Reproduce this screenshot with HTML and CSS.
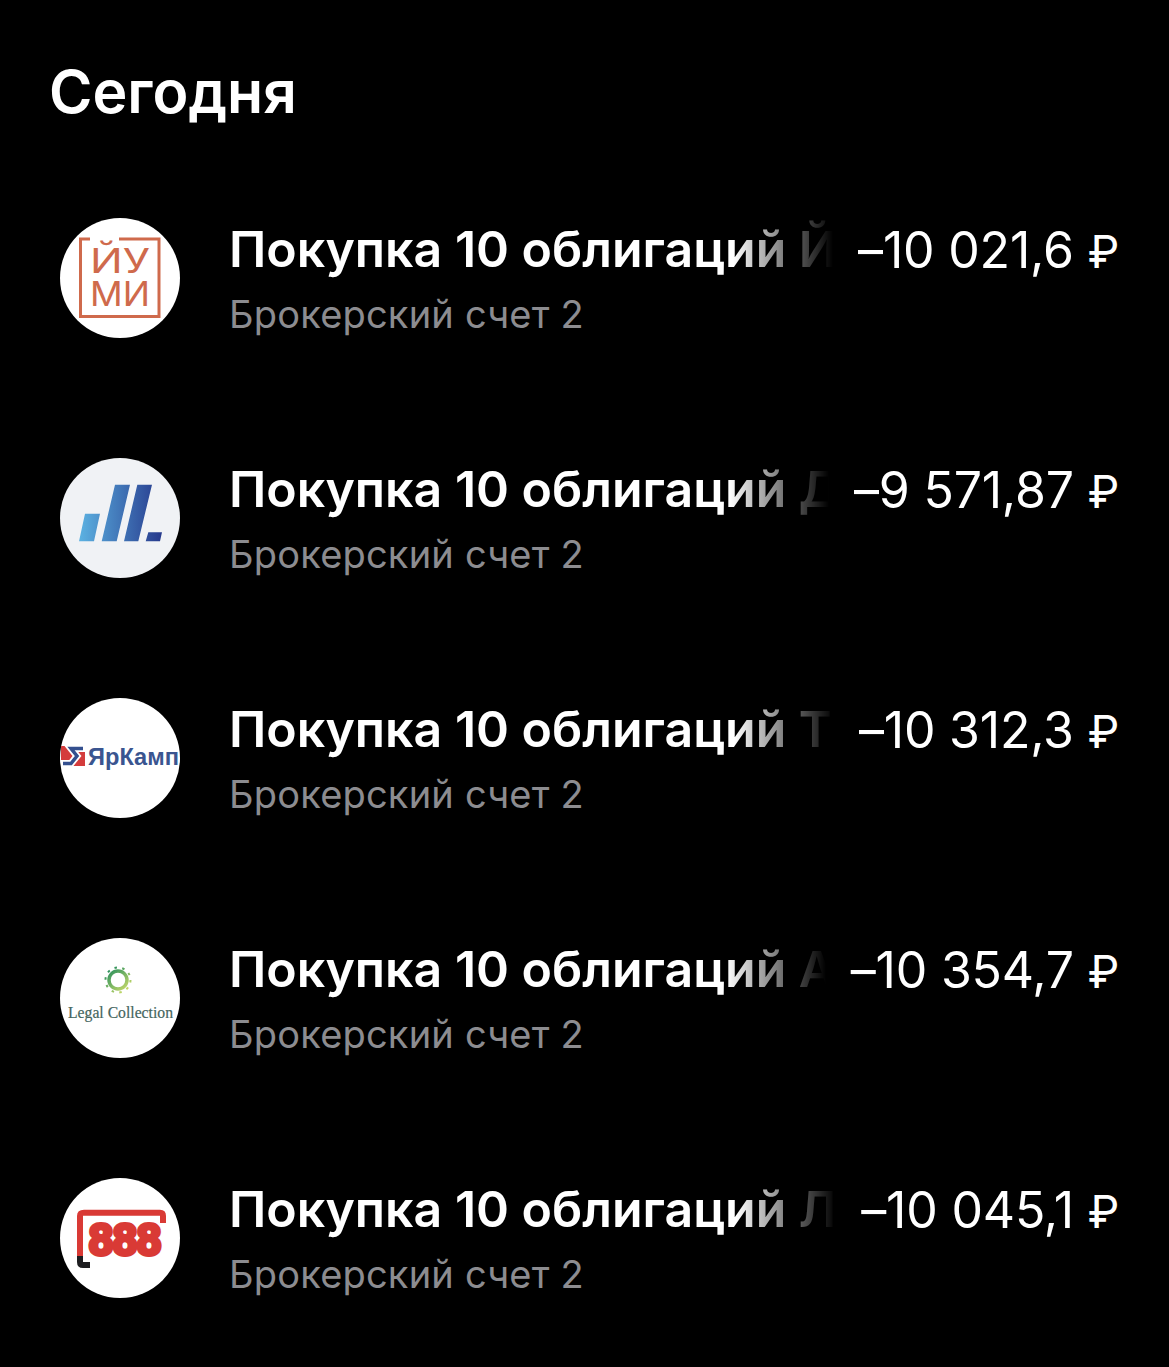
FILE: index.html
```html
<!DOCTYPE html>
<html lang="ru">

<head>
    <meta charset="UTF-8">
    <meta name="viewport" content="width=device-width, initial-scale=1.0">
    <title>Сегодня</title>
    <link rel="stylesheet" href="styles.css">
</head>

<body>
    <h1 class="day-title">Сегодня</h1>

    <div class="operations">
        <div class="operation">
            <div class="logo">
                <svg viewBox="0 0 120 120" width="120" height="120">
                    <path d="M30 21H20.5V98.5H99V21H59" fill="none" stroke="#cf6a4c" stroke-width="3"/>
                    <text class="logo-imi" x="30" y="55" textLength="60" lengthAdjust="spacingAndGlyphs">ЙУ</text>
                    <text class="logo-imi" x="30" y="88" textLength="60" lengthAdjust="spacingAndGlyphs">МИ</text>
                </svg>
            </div>
            <div class="operation-text">
                <div class="operation-name">Покупка 10 облигаций Йошкар-Ола</div>
                <div class="operation-account">Брокерский счет 2</div>
            </div>
            <div class="operation-sum">–10 021,6 <span class="rub">₽</span></div>
        </div>

        <div class="operation">
            <div class="logo logo-grey">
                <svg viewBox="0 0 120 120" width="120" height="120">
                    <defs>
                        <linearGradient id="bars" gradientUnits="userSpaceOnUse" x1="19" y1="0" x2="102" y2="0">
                            <stop offset="0" stop-color="#5cb2e2"/>
                            <stop offset="1" stop-color="#26398c"/>
                        </linearGradient>
                    </defs>
                    <path fill="url(#bars)" d="M25 55.7H40L34 83.3H19ZM55 26.7H70L56.7 83.3H41.7ZM77.3 26.7H92L78.3 83.3H64ZM88.3 74.3H102L100 83.3H85.7Z"/>
                </svg>
            </div>
            <div class="operation-text">
                <div class="operation-name">Покупка 10 облигаций Дельта</div>
                <div class="operation-account">Брокерский счет 2</div>
            </div>
            <div class="operation-sum">–9 571,87 <span class="rub">₽</span></div>
        </div>

        <div class="operation">
            <div class="logo">
                <svg viewBox="0 0 120 120" width="120" height="120">
                    <path fill="#d43c3c" d="M1 48H13V62H1ZM13 54H25V68H13Z"/>
                    <path d="M23 50.5H11L17 58L11 65.5H3" fill="none" stroke="#fff" stroke-width="7"/>
                    <path d="M23 50.5H11L17 58L11 65.5H3" fill="none" stroke="#34508f" stroke-width="3.5"/>
                    <text class="logo-yarkamp" x="28" y="67" textLength="91" lengthAdjust="spacingAndGlyphs">ЯрКамп</text>
                </svg>
            </div>
            <div class="operation-text">
                <div class="operation-name">Покупка 10 облигаций Т Плюс</div>
                <div class="operation-account">Брокерский счет 2</div>
            </div>
            <div class="operation-sum">–10 312,3 <span class="rub">₽</span></div>
        </div>

        <div class="operation">
            <div class="logo">
                <svg viewBox="0 0 120 120" width="120" height="120">
                    <defs>
                        <linearGradient id="wreath" gradientUnits="userSpaceOnUse" x1="48" y1="30" x2="68" y2="54">
                            <stop offset="0" stop-color="#1f8a5c"/>
                            <stop offset="1" stop-color="#d4e06a"/>
                        </linearGradient>
                    </defs>
                    <circle cx="58" cy="42" r="9" fill="none" stroke="url(#wreath)" stroke-width="3.5"/>
                    <circle cx="58" cy="42" r="12.5" fill="none" stroke="url(#wreath)" stroke-width="2" stroke-dasharray="2.5 5.35"/>
                    <text class="logo-legal" x="8" y="79.5" textLength="105" lengthAdjust="spacingAndGlyphs">Legal Collection</text>
                </svg>
            </div>
            <div class="operation-text">
                <div class="operation-name">Покупка 10 облигаций Агентство</div>
                <div class="operation-account">Брокерский счет 2</div>
            </div>
            <div class="operation-sum">–10 354,7 <span class="rub">₽</span></div>
        </div>

        <div class="operation">
            <div class="logo">
                <svg viewBox="0 0 120 120" width="120" height="120">
                    <path d="M20 78V38Q20 34.7 24 34.7H100Q103 34.7 103 38V45" fill="none" stroke="#d93a35" stroke-width="6"/>
                    <path d="M20 78V84Q20 87 23 87H30" fill="none" stroke="#1d1d20" stroke-width="6"/>
                    <text class="logo-888" x="29" y="77" textLength="72" lengthAdjust="spacingAndGlyphs">888</text>
                </svg>
            </div>
            <div class="operation-text">
                <div class="operation-name">Покупка 10 облигаций Лига</div>
                <div class="operation-account">Брокерский счет 2</div>
            </div>
            <div class="operation-sum">–10 045,1 <span class="rub">₽</span></div>
        </div>
    </div>
</body>

</html>
```

FILE: styles.css
```css
body {
    margin: 0;
    background-color: #000;
    color: #fff;
    font-family: Inter, "Liberation Sans", sans-serif;
    padding: 60px 50px 0 49px;
}

.day-title {
    margin: 0 0 94px;
    font-size: 59px;
    line-height: 64px;
    font-weight: 600;
}

.operation {
    display: flex;
    align-items: center;
    height: 120px;
    margin-bottom: 120px;
    padding-left: 11px;
}

.logo {
    flex: none;
    width: 120px;
    height: 120px;
    border-radius: 50%;
    overflow: hidden;
    background-color: #fff;
    margin-right: 49px;
}

.logo svg {
    display: block;
}

.logo-grey {
    background-color: #f0f2f5;
}

.logo-imi {
    font-size: 34px;
    font-weight: 400;
    fill: #cf6a4c;
}

.logo-yarkamp {
    font-family: "Liberation Sans", sans-serif;
    font-size: 24px;
    font-weight: 700;
    fill: #3a5590;
}

.logo-legal {
    font-family: "Liberation Serif", serif;
    font-size: 16.5px;
    fill: #456660;
    stroke: #456660;
    stroke-width: 0.2;
}

.logo-888 {
    font-family: "Liberation Sans", sans-serif;
    font-size: 44px;
    font-weight: 700;
    fill: #d93a35;
    stroke: #d93a35;
    stroke-width: 4;
}

.operation-text {
    flex: 1;
    min-width: 0;
}

.operation-name {
    font-size: 50px;
    line-height: 60px;
    font-weight: 600;
    white-space: nowrap;
    overflow: hidden;
    -webkit-mask-image: linear-gradient(to left, transparent 0, #000 100px);
    mask-image: linear-gradient(to left, transparent 0, #000 100px);
}

.operation-account {
    margin-top: 12px;
    font-size: 38px;
    line-height: 46px;
    letter-spacing: 0.2px;
    color: #8c8c90;
}

.operation-sum {
    flex: none;
    margin: 2px 0 0 25px;
    font-size: 50px;
    line-height: 60px;
    letter-spacing: -0.2px;
    align-self: flex-start;
}

.rub {
    font-size: 45px;
}
```
